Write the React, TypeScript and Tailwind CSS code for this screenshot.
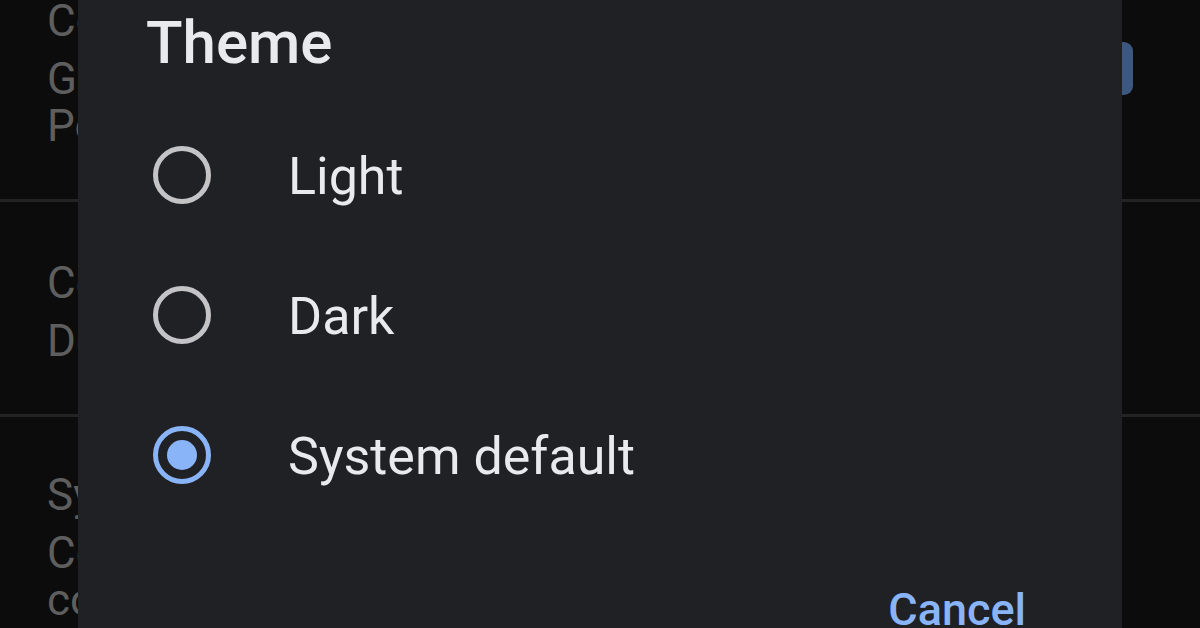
import React from "react";

type Option = { label: string; checked?: boolean };

const options: Option[] = [
  { label: "Light" },
  { label: "Dark" },
  { label: "System default", checked: true },
];

function Radio({ checked }: { checked?: boolean }) {
  if (checked) {
    return (
      <div className="flex h-[58px] w-[58px] items-center justify-center rounded-full border-[5px] border-[#8ab4f8]">
        <div className="h-[30px] w-[30px] rounded-full bg-[#8ab4f8]" />
      </div>
    );
  }
  return <div className="h-[58px] w-[58px] rounded-full border-[5px] border-[#c4c4c6]" />;
}

function SettingRow({
  title,
  lines,
  height,
  toggle = false,
  padTop,
}: {
  title: string;
  lines: string[];
  height: string;
  toggle?: boolean;
  padTop: string;
}) {
  return (
    <div className={`flex items-start justify-between border-b-[3px] border-[#232323] pl-[47px] pr-[67px] ${height}`}>
      <div className={`flex flex-col text-[44px] leading-[47px] text-[#5e5e5e] ${padTop}`}>
        <span className="whitespace-nowrap">{title}</span>
        <div className="mt-[11px] flex flex-col">
          {lines.map((l, i) => (
            <span key={i} className="whitespace-nowrap">
              {l}
            </span>
          ))}
        </div>
      </div>
      {toggle && <div className="mt-[42px] h-[53px] w-[60px] rounded-[9px] bg-[#3d5880]" />}
    </div>
  );
}

export default function App() {
  return (
    <div className="relative h-[628px] w-[1200px] overflow-hidden bg-[#0c0c0c] font-['Roboto',sans-serif]">
      <div className="flex flex-col">
        <SettingRow
          title="Contacts"
          lines={["Google Account", "Personal info"]}
          height="h-[202px]"
          padTop="-mt-[2px]"
          toggle
        />
        <SettingRow title="Conversations" lines={["Default"]} height="h-[215px]" padTop="pt-[58px]" />
        <SettingRow
          title="System theme"
          lines={["Controls how the app", "colours appear"]}
          height="h-[260px]"
          padTop="pt-[55px]"
        />
      </div>

      <div className="absolute left-[78px] top-[-20px] flex h-[700px] w-[1044px] flex-col bg-[#202124]">
        <h2 className="pl-[68px] pt-[28px] text-[60px] font-medium leading-[70px] text-[#e8eaed]">Theme</h2>
        <div className="mt-[27px] flex flex-col">
          {options.map((o) => (
            <div key={o.label} className="flex h-[140px] items-center pl-[75px]">
              <Radio checked={o.checked} />
              <span className="ml-[77px] pt-[3px] text-[52px] leading-none text-[#e8eaed]">{o.label}</span>
            </div>
          ))}
        </div>
        <div className="flex justify-end pr-[96px] pt-[62px]">
          <span className="text-[45px] font-medium leading-none text-[#8ab4f8]">Cancel</span>
        </div>
      </div>
    </div>
  );
}
